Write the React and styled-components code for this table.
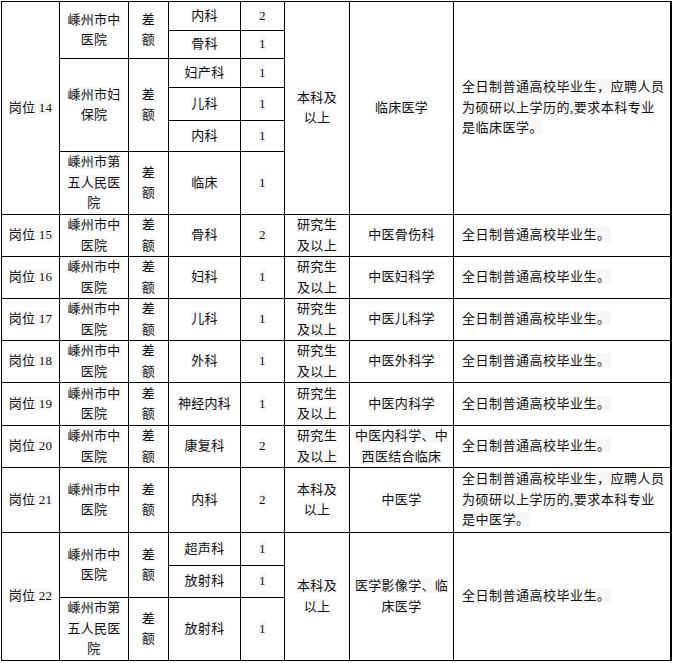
import React from 'react'
import styled, { createGlobalStyle } from 'styled-components'

const GlobalStyle = createGlobalStyle`
  html, body {
    margin: 0;
    padding: 0;
    background: #ffffff;
  }
  body {
    padding: 1px 0 0 1px;
  }
`

// column widths, border included (px)
const columns = [58, 69, 40, 72, 44, 65, 104, 218]

// grid rows, bottom border included (px)
const rowHeights = [29, 28, 29, 33, 31, 63, 42, 42, 42, 42, 43, 42, 65, 33, 32, 63]

const ZHONGYI = ['嵊州市中', '医院']
const FUBAO = ['嵊州市妇', '保院']
const DIWU = ['嵊州市第', '五人民医', '院']
const CHAE = ['差', '额']
const BENKE = ['本科及', '以上']
const YANJIU = ['研究生', '及以上']
const PLAIN = ['全日制普通高校毕业生。']

// each row: list of cells, [lines, rowSpan, align]
const rows = [
  [[['岗位 14'], 6], [ZHONGYI, 2], [CHAE, 2], [['内科']], [['2']], [BENKE, 6], [['临床医学'], 6],
    [['全日制普通高校毕业生，应聘人员', '为硕研以上学历的,要求本科专业', '是临床医学。'], 6, 'left']],
  [[['骨科']], [['1']]],
  [[FUBAO, 3], [CHAE, 3], [['妇产科']], [['1']]],
  [[['儿科']], [['1']]],
  [[['内科']], [['1']]],
  [[DIWU], [CHAE], [['临床']], [['1']]],
  [[['岗位 15']], [ZHONGYI], [CHAE], [['骨科']], [['2']], [YANJIU], [['中医骨伤科']], [PLAIN, 1, 'left']],
  [[['岗位 16']], [ZHONGYI], [CHAE], [['妇科']], [['1']], [YANJIU], [['中医妇科学']], [PLAIN, 1, 'left']],
  [[['岗位 17']], [ZHONGYI], [CHAE], [['儿科']], [['1']], [YANJIU], [['中医儿科学']], [PLAIN, 1, 'left']],
  [[['岗位 18']], [ZHONGYI], [CHAE], [['外科']], [['1']], [YANJIU], [['中医外科学']], [PLAIN, 1, 'left']],
  [[['岗位 19']], [ZHONGYI], [CHAE], [['神经内科']], [['1']], [YANJIU], [['中医内科学']], [PLAIN, 1, 'left']],
  [[['岗位 20']], [ZHONGYI], [CHAE], [['康复科']], [['2']], [YANJIU], [['中医内科学、中', '西医结合临床']], [PLAIN, 1, 'left']],
  [[['岗位 21']], [ZHONGYI], [CHAE], [['内科']], [['2']], [BENKE], [['中医学']],
    [['全日制普通高校毕业生，应聘人员', '为硕研以上学历的,要求本科专业', '是中医学。'], 1, 'left']],
  [[['岗位 22'], 3], [ZHONGYI, 2], [CHAE, 2], [['超声科']], [['1']], [BENKE, 3], [['医学影像学、临', '床医学'], 3], [PLAIN, 3, 'left']],
  [[['放射科']], [['1']]],
  [[DIWU], [CHAE], [['放射科']], [['1']]],
]

const Table = styled.table`
  border-collapse: separate;
  border-spacing: 0;
  table-layout: fixed;
  width: ${columns.reduce((a, b) => a + b, 0) + 1}px;
  border-top: 1px solid #000;
  border-left: 1px solid #000;
  font-family: "Liberation Serif", "Noto Sans CJK SC", serif;
  font-size: 13px;
  color: #111;
`

const Col = styled.col`
  width: ${p => p.$w}px;
`

const Row = styled.tr`
  height: ${p => p.$h}px;
`

const Cell = styled.td`
  box-sizing: border-box;
  padding: ${p => (p.$align === 'left' ? '0 4px 0 8px' : '0 1px')};
  border-right: ${p => (p.$last ? 2 : 1)}px solid #000;
  border-bottom: 1px solid #000;
  vertical-align: middle;
  text-align: ${p => p.$align || 'center'};
  line-height: 20.5px;
  letter-spacing: ${p => (p.$align === 'left' ? '0.5px' : '0.3px')};
  white-space: nowrap;
  overflow: hidden;
`

const Text = styled.span`
  background: #f7f7f7;
`

function App() {
  return (
    <>
      <GlobalStyle />
      <Table>
        <colgroup>
          {columns.map((w, i) => <Col key={i} $w={w} />)}
        </colgroup>
        <tbody>
          {rows.map((cells, r) => (
            <Row key={r} $h={rowHeights[r]}>
              {cells.map(([lines, span = 1, align], c) => (
                <Cell key={c} rowSpan={span} $align={align} $last={align === 'left'}>
                  {lines.map((line, i) => (
                    <React.Fragment key={i}>
                      {i > 0 && <br />}
                      <Text>{line}</Text>
                    </React.Fragment>
                  ))}
                </Cell>
              ))}
            </Row>
          ))}
        </tbody>
      </Table>
    </>
  )
}

export default App
